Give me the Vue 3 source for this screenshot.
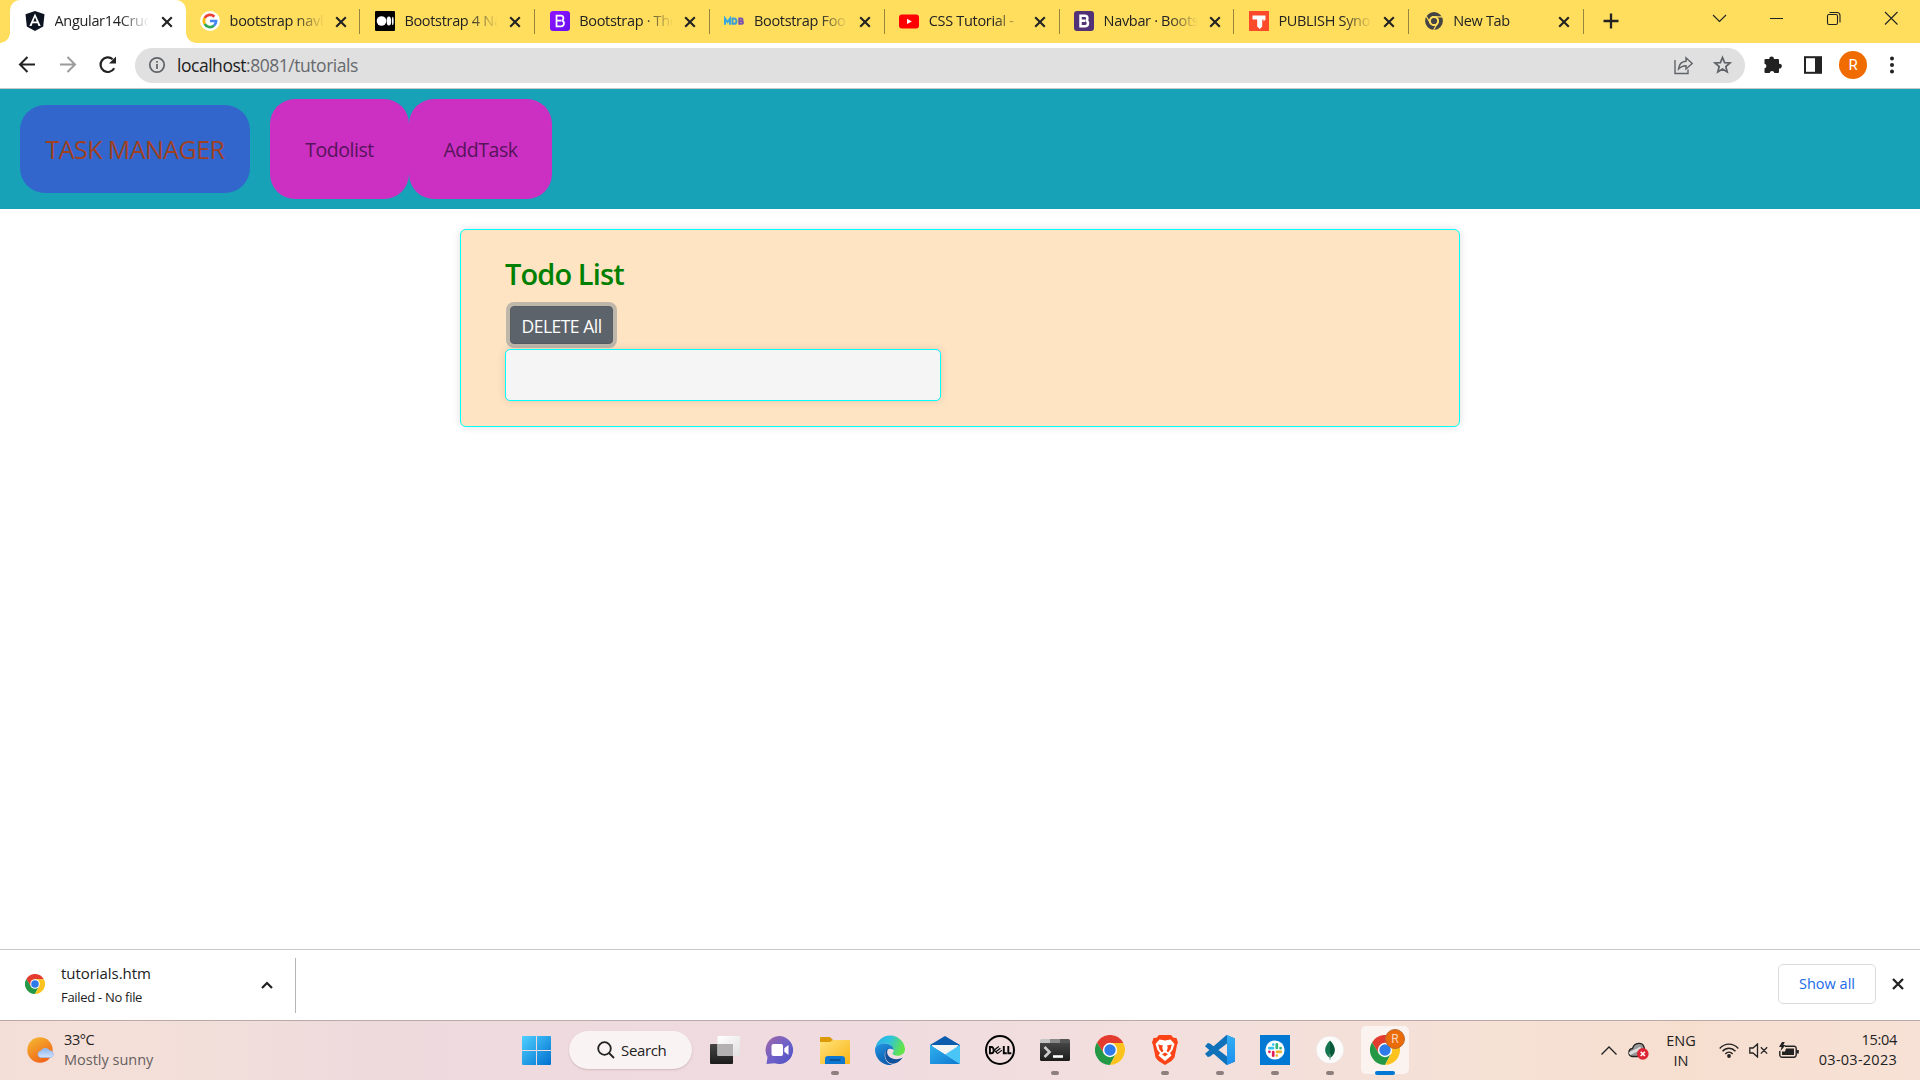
<script setup>
const tabs = [
  { id: 'angular', title: 'Angular14Cruc', active: true },
  { id: 'google', title: 'bootstrap navb' },
  { id: 'medium', title: 'Bootstrap 4 Na' },
  { id: 'bs5', title: 'Bootstrap · The' },
  { id: 'mdb', title: 'Bootstrap Foo' },
  { id: 'youtube', title: 'CSS Tutorial -' },
  { id: 'bs4', title: 'Navbar · Boots' },
  { id: 'publish', title: 'PUBLISH Syno' },
  { id: 'newtab', title: 'New Tab' },
]
const apps = [
  { id: 'taskview' },
  { id: 'chat' },
  { id: 'explorer', open: true },
  { id: 'edge' },
  { id: 'mail' },
  { id: 'dell' },
  { id: 'terminal', open: true },
  { id: 'chrome' },
  { id: 'brave', open: true },
  { id: 'vscode', open: true },
  { id: 'slack', open: true },
  { id: 'mongo', open: true },
  { id: 'profile', open: true, current: true },
]
</script>

<template>
  <div class="screen">
    <svg class="defs" width="0" height="0">
      <defs>
        <linearGradient id="gWin" x1="0" y1="0" x2="1" y2="1"><stop offset="0" stop-color="#4fd0ff" /><stop offset="1" stop-color="#0070cf" /></linearGradient>
        <linearGradient id="gSun" x1="0" y1="0" x2="0.6" y2="1"><stop offset="0" stop-color="#f5bd31" /><stop offset="1" stop-color="#f0641a" /></linearGradient>
        <linearGradient id="gCloud" x1="0" y1="0" x2="0" y2="1"><stop offset="0" stop-color="#8db6ef" /><stop offset="1" stop-color="#d3e2fa" /></linearGradient>
        <linearGradient id="gDark" x1="0" y1="0" x2="0" y2="1"><stop offset="0" stop-color="#454545" /><stop offset="1" stop-color="#1c1c1c" /></linearGradient>
        <linearGradient id="gPane" x1="0" y1="0" x2="1" y2="1"><stop offset="0" stop-color="#ffffff" /><stop offset="1" stop-color="#e2e0e0" /></linearGradient>
        <linearGradient id="gChat" x1="0" y1="0" x2="1" y2="1"><stop offset="0" stop-color="#a267a2" /><stop offset="0.5" stop-color="#7061c8" /><stop offset="1" stop-color="#4b51c5" /></linearGradient>
        <linearGradient id="gFolder" x1="0" y1="0" x2="1" y2="1"><stop offset="0" stop-color="#ffe27a" /><stop offset="1" stop-color="#fab516" /></linearGradient>
        <linearGradient id="gEdge" x1="0" y1="0" x2="1" y2="0.3"><stop offset="0" stop-color="#2aaee8" /><stop offset="0.5" stop-color="#2fc2df" /><stop offset="1" stop-color="#62e34b" /></linearGradient>
        <linearGradient id="gEdgeB" x1="0" y1="0" x2="0.4" y2="1"><stop offset="0" stop-color="#2396e2" /><stop offset="1" stop-color="#0c5eb0" /></linearGradient>
        <linearGradient id="gMail" x1="0" y1="0" x2="1" y2="1"><stop offset="0" stop-color="#2fb2ee" /><stop offset="1" stop-color="#1077d0" /></linearGradient>
        <linearGradient id="gCode" x1="0" y1="0" x2="0" y2="1"><stop offset="0" stop-color="#32aef2" /><stop offset="1" stop-color="#1c8ff0" /></linearGradient>
        <linearGradient id="gBs" x1="0" y1="0" x2="1" y2="1"><stop offset="0" stop-color="#9013fe" /><stop offset="1" stop-color="#6610f2" /></linearGradient>
        <symbol id="chrome" viewBox="0 0 30 30">
          <circle cx="15" cy="15" r="15" fill="#fff" />
          <path d="M15 8H28.3A15 15 0 0 0 2 7.5L9 19Z" fill="#e33b2e" />
          <path d="M8.9 18.5L2 7.5A15 15 0 0 0 15 30L21.1 18.5Z" fill="#249845" />
          <path d="M15 8H28.3A15 15 0 0 1 15 30L21.4 18Z" fill="#fcc31e" />
          <circle cx="15" cy="15" r="7.2" fill="#fff" />
          <circle cx="15" cy="15" r="5.7" fill="#2f7bea" />
        </symbol>
      </defs>
    </svg>

    <header class="tabstrip">
      <div v-for="(t, i) in tabs" :key="t.id" class="tab" :class="{ active: t.active }">
        <svg class="favicon" width="20" height="20" viewBox="0 0 20 20">
          <g v-if="t.id === 'angular'">
            <path d="M10 0L19.5 3.3L18.2 15.4L10 20L1.8 15.4L.5 3.3Z" fill="#0d1320" />
            <path d="M10 2.5L4.3 15H6.5L7.6 12.3H12.4L13.5 15H15.7ZM10 6.2L11.7 10.4H8.3Z" fill="#fff" fill-rule="evenodd" />
          </g>
          <g v-else-if="t.id === 'google'">
            <circle cx="10" cy="10" r="10" fill="#fff" />
            <g fill="none" stroke-width="2.7">
              <path d="M14.4 5.7A6.1 6.1 0 0 0 4.7 7" stroke="#ea4335" />
              <path d="M4.7 7A6.1 6.1 0 0 0 4.7 13" stroke="#fbbc05" />
              <path d="M4.7 13A6.1 6.1 0 0 0 14 14.6" stroke="#34a853" />
              <path d="M10 10H16.1A6.1 6.1 0 0 1 14 14.6" stroke="#4285f4" />
            </g>
          </g>
          <g v-else-if="t.id === 'medium'">
            <rect width="20" height="20" rx="1" />
            <circle cx="6.5" cy="10" r="4.8" fill="#fff" />
            <ellipse cx="13.9" cy="10" rx="2.3" ry="4.6" fill="#fff" />
            <ellipse cx="17.8" cy="10" rx=".8" ry="4.2" fill="#fff" />
          </g>
          <g v-else-if="t.id === 'bs5' || t.id === 'bs4'">
            <rect width="20" height="20" rx="3" :fill="t.id === 'bs5' ? 'url(#gBs)' : '#513277'" />
            <path d="M6.5 4.7H10.8C14 4.7 14.2 8.8 11.7 9.6C15 10.2 14.7 15.3 10.9 15.3H6.5ZM6.5 9.7H11" fill="none" stroke="#fff" :stroke-width="t.id === 'bs5' ? 1.7 : 2.5" />
          </g>
          <g v-else-if="t.id === 'mdb'" fill="none" stroke-width="2">
            <path d="M1 13.8V7.5L3.5 11L6 7.5V13.8" stroke="#35a8df" />
            <path d="M8.5 7.5V12.8H10C13.3 12.8 13.3 7.5 10 7.5Z" stroke="#3d9fd0" />
            <path d="M15.3 7.5V12.8H18C19.3 12.8 19.3 10.2 18 10.2H16H17.5C18.8 10.2 18.8 7.5 17.5 7.5Z" stroke="#7954ad" />
          </g>
          <g v-else-if="t.id === 'youtube'">
            <rect y="3.5" width="20" height="14" rx="3" fill="#f00" /><path d="M8 7.7V13.1L12.9 10.4Z" fill="#fff" />
          </g>
          <g v-else-if="t.id === 'publish'">
            <rect width="20" height="20" fill="#fb4a2a" /><path d="M3.5 4.5H16.5V8.5L14.5 10.5V8.5H13.2V15.5L10.8 18L8.2 15.6V8.5H3.5Z" fill="#fff" />
          </g>
          <g v-else fill="none" stroke="#444">
            <circle cx="10" cy="10" r="3.1" fill="#444" stroke="none" />
            <circle cx="10" cy="10" r="6.9" stroke-width="4" />
            <circle cx="10" cy="10" r="4.3" stroke="#ffde5e" stroke-width="1.5" />
            <path d="M10 5.8H18.5M6.4 12.1L2 5M13.6 12.1L9.5 19" stroke="#ffde5e" stroke-width="1.2" />
          </g>
        </svg>
        <span class="tab-title">{{ t.title }}</span>
        <svg class="x" width="12" height="12" viewBox="0 0 12 12"><path d="M1.2 1.2L10.8 10.8M10.8 1.2L1.2 10.8" stroke="#222" stroke-width="2.1" /></svg>
        <i v-if="i > 0" class="sep"></i>
      </div>
      <svg class="plus" width="16" height="16" viewBox="0 0 16 16"><path d="M8 .5V15.5M.5 8H15.5" stroke="#222" stroke-width="2.3" /></svg>
      <svg class="winbtns" width="190" height="16" viewBox="0 0 190 16" fill="none" stroke="#222" stroke-width="1.1">
        <path d="M2 5L8.5 11.5L15 5M59 8.5H72" />
        <rect x="116.5" y="4.5" width="10" height="10" rx="1.5" /><path d="M118.5 2.5H126A3 3 0 0 1 129 5.5V12.5" />
        <path d="M174 2L186.5 14.5M186.5 2L174 14.5" />
      </svg>
    </header>

    <div class="toolbar">
      <svg class="nav-icons" width="135" height="36" viewBox="0 0 135 36" fill="none" stroke-width="2">
        <path d="M35 17.5H20.5M27.5 10L20 17.5L27.5 25" stroke="#222" />
        <path d="M60 17.5H74.5M67.5 10L75 17.5L67.5 25" stroke="#9c9c9c" />
        <path d="M114.2 21.3A7.3 7.3 0 1 1 112.7 12.2" stroke="#222" stroke-width="2.2" /><path d="M116 9.5V16.5H109Z" fill="#222" />
      </svg>
      <div class="omnibox">
        <svg class="info" width="18" height="18" viewBox="0 0 18 18" fill="none" stroke="#5f6368" stroke-width="1.7"><circle cx="9" cy="9" r="7.2" /><path d="M9 8V13M9 5V6.8" /></svg>
        <span class="url"><b>localhost</b>:8081/tutorials</span>
        <svg class="omni-actions" width="62" height="20" viewBox="0 0 62 20" fill="none" stroke="#5f6368" stroke-width="1.4">
          <path d="M2 5V18.5H15V14.5M5.5 14C6 9.5 8.5 6.6 13 6.3V2.8L19.2 8.5L13 14V10.7C9.5 10.7 7.5 11.8 5.5 14Z" />
          <path d="M49.5 2.5L51.6 7.6L57 8L52.8 11.5L54.2 17L49.5 14L44.8 17L46.2 11.5L42 8L47.4 7.6Z" stroke-width="1.7" />
        </svg>
      </div>
      <svg class="puzzle" width="20" height="20" viewBox="0 0 20 20"><path d="M2.5 4H6.2A2.4 2.4 0 1 1 11 4H15A1 1 0 0 1 16 5V8.7A2.4 2.4 0 1 1 16 13.4V17A1 1 0 0 1 15 18H11.4A2.4 2.4 0 0 0 6.7 18H2.5A1 1 0 0 1 1.5 17V13.4A2.4 2.4 0 0 0 1.5 8.7V5A1 1 0 0 1 2.5 4Z" fill="#222" /></svg>
      <svg class="panel" width="18" height="18" viewBox="0 0 18 18"><rect x="1" y="1.2" width="16" height="15.6" fill="none" stroke="#222" stroke-width="2" /><path d="M11 1H17V17H11Z" fill="#222" /></svg>
      <span class="avatar">R</span>
      <svg class="dots" width="6" height="18" viewBox="0 0 6 18" fill="#222"><circle cx="3" cy="2.5" r="2" /><circle cx="3" cy="9" r="2" /><circle cx="3" cy="15.5" r="2" /></svg>
    </div>

    <nav class="navbar">
      <a class="brand">TASK MANAGER</a>
      <a class="link todo">Todolist</a>
      <a class="link add">AddTask</a>
    </nav>

    <main>
      <section class="card">
        <h3>Todo List</h3>
        <button>DELETE All</button>
        <div class="list"></div>
      </section>
    </main>

    <div class="downloads">
      <svg class="dl-icon" width="20" height="20"><use href="#chrome" /></svg>
      <div class="dl-text">
        <span class="dl-name">tutorials.htm</span>
        <span class="dl-state">Failed - No file</span>
      </div>
      <svg class="caret" width="12" height="8" viewBox="0 0 12 8"><path d="M1 7L6 2L11 7" fill="none" stroke="#222" stroke-width="2.2" /></svg>
      <i class="dl-sep"></i>
      <a class="showall"><span>Show all</span></a>
      <svg class="dl-x" width="12" height="12" viewBox="0 0 12 12"><path d="M1 1L11 11M11 1L1 11" stroke="#222" stroke-width="2.3" /></svg>
    </div>

    <footer class="taskbar">
      <div class="weather">
        <svg width="28" height="26" viewBox="0 0 28 26">
          <circle cx="13" cy="13" r="12.7" fill="url(#gSun)" />
          <path d="M13.5 20.5A3.3 3.3 0 0 1 14 14A5 5 0 0 1 22.6 13.6A3.7 3.7 0 0 1 24.5 20.5Z" fill="url(#gCloud)" stroke="#9bbcf0" stroke-width=".7" />
        </svg>
        <div class="w-text"><span class="temp">33°C</span><span class="sky">Mostly sunny</span></div>
      </div>
      <div class="start">
        <svg width="29" height="29" viewBox="0 0 29 29"><path d="M0 1A1 1 0 0 1 1 0H14V14H0ZM15 0H28A1 1 0 0 1 29 1V14H15ZM0 15H14V29H1A1 1 0 0 1 0 28ZM15 15H29V28A1 1 0 0 1 28 29H15Z" fill="url(#gWin)" /></svg>
      </div>
      <div class="search">
        <svg width="18" height="18" viewBox="0 0 18 18" fill="none" stroke="#222" stroke-width="1.8"><circle cx="7.5" cy="7.5" r="6.3" /><path d="M12 12L17 17" /></svg>
        <span>Search</span>
      </div>
      <div class="apps">
        <div v-for="a in apps" :key="a.id" class="app" :class="{ current: a.current }">
          <svg v-if="a.id === 'taskview'" width="30" height="30" viewBox="0 0 30 30">
            <rect y="9" width="23" height="20" rx="1" fill="url(#gDark)" /><rect x="7.5" y="1" width="22.5" height="20" rx="1" fill="url(#gPane)" /><path d="M7.5 9H23V21H8.5A1 1 0 0 1 7.5 20Z" fill="#b3b1b1" />
          </svg>
          <svg v-else-if="a.id === 'chat'" width="30" height="30" viewBox="0 0 30 30">
            <path d="M15 1A14 14 0 1 1 9.5 28.2L1.5 29L2.5 22A14 14 0 0 1 15 1Z" fill="url(#gChat)" />
            <rect x="6.5" y="9" width="11.5" height="12" rx="2" fill="#fff" /><path d="M19.3 13.3L23.5 10V20L19.3 16.7Z" fill="#fff" />
          </svg>
          <svg v-else-if="a.id === 'explorer'" width="30" height="30" viewBox="0 0 30 30">
            <path d="M0 3A1 1 0 0 1 1 2H10L13 5V10H0Z" fill="#dc9a08" /><path d="M0 7H10L13 5H29A1 1 0 0 1 30 6V28A1 1 0 0 1 29 29H1A1 1 0 0 1 0 28Z" fill="url(#gFolder)" />
            <path d="M5 29V24A3 3 0 0 1 8 21H22A3 3 0 0 1 25 24V29Z" fill="#0e78d0" /><path d="M9.5 25H20.5" stroke="#0a4a86" stroke-width="1.4" />
          </svg>
          <svg v-else-if="a.id === 'edge'" width="30" height="30" viewBox="0 0 30 30">
            <path d="M.3 13A15 15 0 0 1 30 14C30 18.5 26.5 20.8 22.5 20.8C19.5 20.8 17.5 19.8 17.5 18.6C17.5 17.7 18.7 17.4 18.7 15.3C18.7 12 14.5 8.6 9.8 8.6C6 8.6 2.3 10.4 .3 13Z" fill="url(#gEdge)" />
            <path d="M0 15C0 11 4.5 8.5 9.8 8.5C14.5 8.5 18.7 11.6 18.7 15C14 11.5 9.7 15.7 9.7 20C9.7 25 13 29 17.5 29.7A15 15 0 0 1 0 15Z" fill="url(#gEdgeB)" />
            <path d="M13.2 13C10 15 9.2 21 11.5 25C14.5 30 22 30.5 27.8 22.5C20 26.5 13 22.5 12.3 18.5C12 16.5 12.3 14.5 13.2 13Z" fill="#11509b" />
          </svg>
          <svg v-else-if="a.id === 'mail'" width="30" height="30" viewBox="0 0 30 30">
            <path d="M0 10L15 1L30 10V17H0Z" fill="#0b5cad" /><path d="M1.5 10H28.5L22 20H8Z" fill="#f3f3f3" />
            <path d="M0 10L30 29H1A1 1 0 0 1 0 28Z" fill="url(#gMail)" /><path d="M15 19.5L30 10V28.5L29.5 29Z" fill="#49c6f5" /><path d="M0 10V28L1 29H29.5L15 19.5Z" fill="url(#gMail)" />
          </svg>
          <svg v-else-if="a.id === 'dell'" width="30" height="30" viewBox="0 0 30 30">
            <circle cx="15" cy="15" r="14" fill="none" stroke="#050505" stroke-width="2" />
            <g fill="none" stroke="#050505" stroke-width="1.9"><path d="M4.9 12V18.3H6.3C9.5 18.3 9.5 12 6.3 12ZM18.8 11V18.2H21.8M23.3 11V18.2H26.3" /><path d="M9.3 15L13.8 11.5M10.9 16.8L15.4 13.3M12.5 18.6L17 15.1M9.3 15L12.5 18.6" stroke-width="1.2" /></g>
          </svg>
          <svg v-else-if="a.id === 'terminal'" width="30" height="30" viewBox="0 0 30 30">
            <path d="M0 8V5.5A1.5 1.5 0 0 1 1.5 4H10V8Z" fill="#c5c5c5" /><path d="M10 4H20V8H10Z" fill="#898989" /><path d="M20 4H28.5A1.5 1.5 0 0 1 30 5.5V8H20Z" fill="#555" />
            <path d="M0 8H30V24.5A1.5 1.5 0 0 1 28.5 26H1.5A1.5 1.5 0 0 1 0 24.5Z" fill="url(#gDark)" /><path d="M4.5 12L9.5 17L4.5 22" fill="none" stroke="#ccc" stroke-width="2.6" /><path d="M13 21.5H23" stroke="#fff" stroke-width="2.6" />
          </svg>
          <svg v-else-if="a.id === 'chrome'" width="30" height="30"><use href="#chrome" /></svg>
          <svg v-else-if="a.id === 'brave'" width="30" height="30" viewBox="0 0 30 30">
            <path d="M9 0H21L23.5 2.8L26.5 3L28 7.5L27 10L24.5 22.5L21.5 26L15 30L8.5 26L5.5 22.5L3 10L2 7.5L3.5 3L6.5 2.8Z" fill="#fb4317" />
            <path d="M9.5 4.5L15 5.5L20.5 4.5L24.5 9L22.5 15L20 18L21.5 20.5L15 26L8.5 20.5L10 18L7.5 15L5.5 9Z" fill="#fff" />
            <path d="M8.2 9.5L13 10.5L12.2 12.8L13.3 16L12 17.6L9.5 14.5ZM21.8 9.5L17 10.5L17.8 12.8L16.7 16L18 17.6L20.5 14.5ZM15 17.5L18 19.3L15 21.5L12 19.3Z" fill="#fb4317" />
          </svg>
          <svg v-else-if="a.id === 'vscode'" width="30" height="30" viewBox="0 0 30 30">
            <path d="M21.5 0L30 3.5V26.5L21.5 30L2 13L0 11.2L2.8 8L5 8.6L22 21.5V8.5L5 21.4L2.8 22L0 18.8L2 17L21.5 0Z" fill="#0f71b9" /><path d="M22 0L30 3.5V26.5L22 30Z" fill="url(#gCode)" />
          </svg>
          <svg v-else-if="a.id === 'slack'" width="30" height="30" viewBox="0 0 30 30">
            <rect width="30" height="30" fill="#0078d4" /><circle cx="15" cy="15" r="9.6" fill="#fff" />
            <g fill="none" stroke-width="2.7" stroke-linecap="round"><path d="M9.3 13.2H13M13.2 9.5V9.6" stroke="#36c5f0" /><path d="M16.8 9.3V13M20.5 13.2H20.6" stroke="#2eb67d" /><path d="M17 16.8H20.7M16.8 20.5V20.6" stroke="#ecb22e" /><path d="M13.2 17V20.7M9.5 16.8H9.4" stroke="#e01e5a" /></g>
          </svg>
          <svg v-else-if="a.id === 'mongo'" width="30" height="30" viewBox="0 0 30 30">
            <circle cx="15" cy="14.8" r="13.8" fill="#fbfbfb" stroke="#e6dcd8" stroke-width=".5" /><path d="M15 5.5C8 12.5 9 19 15 23Z" fill="#13764e" /><path d="M15 5.5C22 12.5 21 19 15 23Z" fill="#07583b" /><path d="M15 19V25" stroke="#7ca797" />
          </svg>
          <svg v-else width="30" height="30"><use href="#chrome" /></svg>
          <span v-if="a.current" class="badge">R</span>
          <i v-if="a.open" class="mark"></i>
        </div>
      </div>
      <div class="tray">
        <svg class="t-up" width="16" height="9" viewBox="0 0 16 9"><path d="M.5 8.5L8 1L15.5 8.5" fill="none" stroke="#222" stroke-width="1.3" /></svg>
        <svg class="t-cloud" width="21" height="18" viewBox="0 0 21 18">
          <path d="M4 14.5C-.5 13.5 0 7 4.5 6.5C6.5 0 14.5 0 16 5L17 9L10 14.5Z" fill="#999" stroke="#222" stroke-width="1.3" /><path d="M1.5 12C5 9 9 9 13 6" stroke="#ddd" stroke-width="3" fill="none" /><circle cx="14.8" cy="11.9" r="5.8" fill="#dc2634" /><path d="M12.7 9.8L16.9 14M16.9 9.8L12.7 14" stroke="#fff" stroke-width="1.6" />
        </svg>
        <div class="lang"><span>ENG</span><span>IN</span></div>
        <svg class="t-wifi" width="20" height="15" viewBox="0 0 20 15" fill="none" stroke="#222" stroke-width="1.4"><path d="M.7 5.5C6-.3 14-.3 19.3 5.5M3.5 8.3C7.3 4.2 12.7 4.2 16.5 8.3M6.3 11C8.5 8.5 11.5 8.5 13.7 11" /><circle cx="10" cy="13" r="1.9" fill="#222" stroke="none" /></svg>
        <svg class="t-vol" width="19" height="15" viewBox="0 0 19 15" fill="none" stroke="#222" stroke-width="1.3"><path d="M.8 5H4L8.5 1V14L4 10H.8ZM11.8 4.2L18.2 10.6M18.2 4.2L11.8 10.6" /></svg>
        <svg class="t-bat" width="20" height="17" viewBox="0 0 20 17"><path d="M6 4.2H15A2.2 2.2 0 0 1 17.2 6.4V13A2.2 2.2 0 0 1 15 15.2H3A2.2 2.2 0 0 1 .8 13V9" fill="none" stroke="#222" stroke-width="1.4" /><path d="M7 6.5H15V13H3V9.5H6Z" fill="#222" /><path d="M17.5 8H19.8V11.5H17.5Z" fill="#222" /><path d="M3 0H5.8L4.3 3H6.7L1.5 9L2.5 5H0Z" fill="#222" /></svg>
        <div class="clock"><span class="time">15:04</span><span class="date">03-03-2023</span></div>
      </div>
    </footer>
  </div>
</template>

<style>
body { background: #fff; }
</style>

<style scoped>
* { box-sizing: border-box; }
.screen { width: 1920px; height: 1080px; display: flex; flex-direction: column; overflow: hidden; font-family: "Open Sans", "Noto Sans", sans-serif; color: #222; background: #fff; }
.screen span, .screen a, .screen button, .screen h3 { white-space: nowrap; }
svg { display: block; flex: none; }
.defs { position: absolute; }
.tabstrip { height: 43px; flex: none; background: #ffde5e; display: flex; padding-left: 10px; }
.tab { position: relative; width: 174.8px; height: 43px; flex: none; display: flex; align-items: center; padding-left: 14.5px; }
.tab.active { width: 175.6px; padding-left: 15px; background: #fff; border-radius: 10px 10px 0 0; }
.tab.active::before, .tab.active::after { content: ""; position: absolute; bottom: 0; width: 10px; height: 10px; }
.tab.active::before { left: -10px; background: radial-gradient(circle at 0 0, transparent 9.5px, #fff 10px); }
.tab.active::after { right: -10px; background: radial-gradient(circle at 100% 0, transparent 9.5px, #fff 10px); }
.favicon { margin-top: -1px; }
.tab-title { margin-left: 9.5px; width: 98px; font-size: 14.5px; line-height: 22px; letter-spacing: -.32px; margin-top: -2px; -webkit-mask-image: linear-gradient(90deg, #000 66%, transparent 96%); mask-image: linear-gradient(90deg, #000 66%, transparent 96%); }
.x { margin-left: 7px; }
.active .x { margin-left: 8px; }
.sep { position: absolute; right: 0; top: 9px; width: 1px; height: 25px; background: #97843f; }
.plus { margin: 13px 0 0 19px; }
.winbtns { margin: 10px 0 0 92px; }
.toolbar { height: 46px; flex: none; display: flex; align-items: center; border-bottom: 1px solid #c9c9c9; padding-bottom: 1px; }
.omnibox { width: 1610px; height: 35px; border-radius: 18px; background: #e0e0e0; display: flex; align-items: center; padding: 0 10px 0 13px; }
.url { margin-left: 11px; font-size: 17.5px; line-height: 24px; letter-spacing: -.47px; color: #66696d; margin-top: 0; }
.url b { font-weight: 400; color: #222; }
.omni-actions { margin-left: auto; }
.puzzle { margin-left: 18px; }
.panel { margin-left: 21px; }
.avatar { margin-left: 17px; width: 28px; height: 28px; border-radius: 50%; background: #f06c00; color: #fff; font: 15px/28px Roboto, sans-serif; text-align: center; }
.dots { margin-left: 22px; }
.navbar { height: 120px; flex: none; background: #17a2b8; display: flex; align-items: center; padding-left: 20px; }
.brand { width: 230px; height: 88px; line-height: 89px; border-radius: 25px; background: #3366cc; color: #a0401e; font-size: 25px; letter-spacing: -.55px; text-align: center; margin-right: 20px; }
.link { height: 100px; line-height: 102px; border-radius: 25px; background: #cc30c2; color: #56145a; font-size: 19.5px; letter-spacing: -.45px; text-align: center; }
.todo { width: 139px; }
.add { width: 143px; }
main { flex: 1; padding-top: 20px; }
.card { width: 1000px; height: 198px; margin: 0 auto; border: 1px solid #0ff; border-radius: 6px; background: #ffe4c4; padding: 24px 44px 0; box-shadow: 0 0 8px rgba(0, 0, 0, .13); display: flex; flex-direction: column; align-items: flex-start; }
h3 { margin: 0; color: green; font-size: 29px; font-weight: 600; line-height: 40px; letter-spacing: -.9px; }
button { margin: 12px 0 0 5px; width: 103px; height: 38px; border: 1px solid #565e64; border-radius: 4px; background: #5c636a; color: #fff; font: 17.5px/26px "Open Sans", "Noto Sans", sans-serif; letter-spacing: -.5px; padding: 1px 0 0; box-shadow: 0 0 0 4px rgba(130, 138, 145, .5); }
.list { width: 436px; height: 52px; margin-top: 5px; background: #f5f5f5; border: 1px solid #0ff; border-radius: 5px; box-shadow: 0 0 8px rgba(0, 0, 0, .13); }
.downloads { height: 71px; flex: none; border-top: 1px solid #c9c9c9; display: flex; align-items: center; padding: 0 0 2px 25px; }
.dl-text { margin-left: 16px; width: 180px; display: flex; flex-direction: column; padding-top: 2px; }
.dl-name { font-size: 15px; line-height: 24px; letter-spacing: -.05px; }
.dl-state { font-size: 13px; line-height: 24px; letter-spacing: -.3px; }
.caret { margin: 2px 0 0 20px; }
.dl-sep { width: 1px; height: 55px; background: #b5b5b5; margin: 2px 0 0 22px; }
.showall { margin-left: auto; width: 98px; height: 40px; border: 1px solid #d9dbde; border-radius: 5px; color: #1a6ae8; font-size: 14.5px; font-weight: 500; line-height: 38px; text-align: center; }
.dl-x { margin: 0 16px; }
.taskbar { height: 60px; flex: none; border-top: 1px solid #b9aaa8; background: linear-gradient(90deg, #f4dfd8 0, #f3dfd9 10%, #eedadd 19%, #f0dce0 45%, #f3dfdc 63%, #f6e1d5 78%, #f6dfcf 88%, #f7e1d6 100%); display: flex; position: relative; }
.weather { width: 509px; display: flex; align-items: center; padding: 0 0 2px 27px; }
.w-text { margin-left: 9px; display: flex; flex-direction: column; font-size: 14.5px; line-height: 20px; }
.temp { letter-spacing: -.4px; }
.sky { color: #66605e; letter-spacing: 0; }
.start { width: 55px; display: flex; justify-content: center; align-items: center; }
.search { margin: 10px 5px 0; width: 123px; height: 38px; border-radius: 19px; background: #faf3f3; box-shadow: 0 1px 2px rgba(120, 80, 80, .25); display: flex; align-items: center; padding-left: 28px; }
.search span { margin-left: 6px; font-size: 15px; letter-spacing: -.35px; }
.apps { display: flex; }
.app { width: 55px; display: flex; justify-content: center; align-items: center; position: relative; padding-bottom: 1px; }
.app svg { position: relative; }
.current::before { content: ""; position: absolute; left: 4px; top: 5px; width: 48px; height: 48px; border-radius: 5px; background: rgba(255, 255, 255, .6); }
.badge { position: absolute; left: 28px; top: 8px; width: 20px; height: 20px; border-radius: 50%; background: #ea6b08; border: 1px solid #b96a32; color: #fbd8bd; font: 12px/18px Roboto, sans-serif; text-align: center; }
.mark { position: absolute; bottom: 5px; left: 24px; width: 8px; height: 4px; border-radius: 2px; background: #8d7f7d; }
.current .mark { left: 18px; width: 20px; background: #0078d4; }
.tray { margin-left: auto; padding-right: 23px; display: flex; align-items: center; font-size: 14.5px; line-height: 20px; }
.t-cloud { margin-left: 11px; }
.lang { margin-left: 14px; width: 36px; text-align: center; display: flex; flex-direction: column; }
.t-wifi { margin-left: 20px; }
.t-vol { margin-left: 10px; }
.t-bat { margin-left: 11px; }
.clock { margin-left: 16px; width: 82px; display: flex; flex-direction: column; align-items: flex-end; padding-bottom: 2px; }
.time { letter-spacing: -.3px; }
.date { letter-spacing: .25px; }
</style>
